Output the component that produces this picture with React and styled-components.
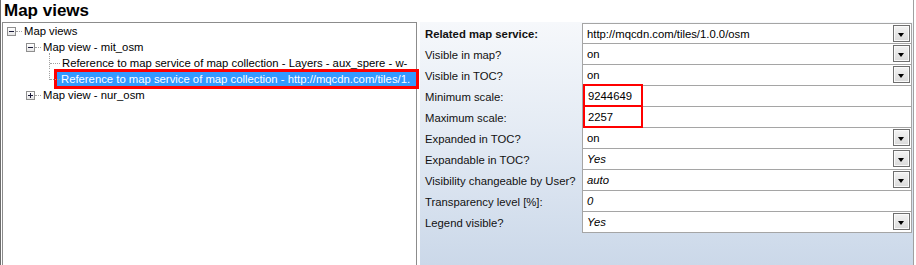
import React from "react";
import styled, { createGlobalStyle, css } from "styled-components";

const GlobalStyle = createGlobalStyle`
	html, body {
		margin: 0;
		padding: 0;
		background: #ffffff;
	}
	body {
		width: 916px;
		height: 265px;
		overflow: hidden;
		font-family: "Liberation Sans", Arial, sans-serif;
		font-size: 11.3px;
		color: #000000;
	}
`;

const Frame = styled.div`
	box-sizing: border-box;
	width: 914px;
	height: 265px;
	border-left: 1px solid #6d6d6d;
	border-right: 1px solid #a0a0a0;
	display: flex;
	flex-direction: column;
	background: #ffffff;
`;

const TitleBar = styled.div`
	height: 22px;
	line-height: 22px;
	padding-left: 3px;
	font-size: 17px;
	font-weight: bold;
	color: #000000;
`;

const Body = styled.div`
	flex: 1;
	display: flex;
	gap: 3px;
	min-height: 0;
`;

const TreePanel = styled.div`
	box-sizing: border-box;
	width: 415px;
	margin-left: 1px;
	border: 1px solid #8c8c8c;
	border-bottom: none;
	background: #ffffff;
`;

const TreeRow = styled.div`
	height: 16px;
	display: flex;
	align-items: center;
	padding-left: ${(p) => p.$level * 19}px;
	white-space: nowrap;
`;

const Connector = styled.div`
	position: relative;
	width: 19px;
	height: 16px;
	flex: none;
`;

const HLine = styled.div`
	position: absolute;
	top: 8px;
	left: ${(p) => p.$from}px;
	right: 0;
	border-top: 1px dotted #a0a0a0;
`;

const VLine = styled.div`
	position: absolute;
	left: 8px;
	top: ${(p) => (p.$first ? -2 : 0)}px;
	height: ${(p) => (p.$last ? 9 : 16)}px;
	border-left: 1px dotted #a0a0a0;
`;

const ExpandBox = styled.div`
	position: absolute;
	left: 4px;
	top: 4px;
	box-sizing: border-box;
	width: 9px;
	height: 9px;
	border: 1px solid #8f8f8f;
	background: linear-gradient(#ffffff, #e6e6e6);

	&::before {
		content: "";
		position: absolute;
		left: 1px;
		top: 3px;
		width: 5px;
		height: 1px;
		background: #1b1b3a;
	}

	${(p) =>
		p.$closed &&
		css`
			&::after {
				content: "";
				position: absolute;
				left: 3px;
				top: 1px;
				width: 1px;
				height: 5px;
				background: #1b1b3a;
			}
		`}
`;

const NodeLabel = styled.span`
	padding: 0 2px;
	line-height: 14px;
	${(p) =>
		p.$selected &&
		css`
			flex: 1;
			min-width: 0;
			overflow: hidden;
			margin-left: -3px;
			padding-left: 4px;
			background: #3399ff;
			color: #ffffff;
			outline: 3px solid #ff0000;
		`}
`;

const PropPanel = styled.div`
	flex: 1;
	padding: 0 1px 0 5px;
	background: linear-gradient(#f6f8fb 0%, #e4ebf4 45%, #cbd8e9 100%);
`;

const PropGrid = styled.div`
	display: grid;
	grid-template-columns: 157px 330px;
	grid-auto-rows: 21px;
	margin-top: 1px;
`;

const PropLabel = styled.div`
	display: flex;
	align-items: center;
	font-weight: ${(p) => (p.$bold ? "bold" : "normal")};
	white-space: nowrap;
	color: #111111;
`;

const ValueCell = styled.div`
	position: relative;
	box-sizing: border-box;
	display: flex;
	align-items: center;
	background: #ffffff;
	border: 1px solid #a5a5a5;
	border-top: ${(p) => (p.$first ? "1px solid #a5a5a5" : "none")};
	padding-left: 4px;
	font-style: ${(p) => (p.$italic ? "italic" : "normal")};
`;

const Marked = styled.span`
	position: absolute;
	left: 0;
	top: -2px;
	bottom: -1px;
	width: 60px;
	border: 2px solid #ff0000;
	box-sizing: border-box;
	padding-left: 3px;
	display: flex;
	align-items: center;
`;

const DropButton = styled.div`
	position: absolute;
	right: 1px;
	top: 1px;
	box-sizing: border-box;
	width: 17px;
	height: 17px;
	border: 1px solid #6f6f6f;
	box-shadow: inset 0 0 0 1px #fafafa;
	background: linear-gradient(#f3f3f3, #dadada);

	&::after {
		content: "";
		position: absolute;
		left: 4px;
		top: 7px;
		border-left: 3.5px solid transparent;
		border-right: 3.5px solid transparent;
		border-top: 4px solid #000000;
	}
`;

const treeNodes = [
	{ level: 0, text: "Map views", box: "open" },
	{ level: 1, text: "Map view - mit_osm", box: "open" },
	{ level: 2, text: "Reference to map service of map collection - Layers - aux_spere - w-", line: "first" },
	{ level: 2, text: "Reference to map service of map collection - http://mqcdn.com/tiles/1.", line: "last", selected: true },
	{ level: 1, text: "Map view - nur_osm", box: "closed" },
];

const properties = [
	{ label: "Related map service:", value: "http://mqcdn.com/tiles/1.0.0/osm", bold: true, drop: true },
	{ label: "Visible in map?", value: "on", drop: true },
	{ label: "Visible in TOC?", value: "on", drop: true },
	{ label: "Minimum scale:", value: "9244649", marked: true },
	{ label: "Maximum scale:", value: "2257", marked: true },
	{ label: "Expanded in TOC?", value: "on", drop: true },
	{ label: "Expandable in TOC?", value: "Yes", italic: true, drop: true },
	{ label: "Visibility changeable by User?", value: "auto", italic: true, drop: true },
	{ label: "Transparency level [%]:", value: "0", italic: true },
	{ label: "Legend visible?", value: "Yes", italic: true, drop: true },
];

const App = () => {
	return (
		<>
			<GlobalStyle />
			<Frame>
				<TitleBar>Map views</TitleBar>
				<Body>
					<TreePanel>
						{treeNodes.map((node, i) => (
							<TreeRow key={i} $level={node.level}>
								<Connector>
									{node.box ? (
										<>
											<ExpandBox $closed={node.box === "closed"} />
											<HLine $from={13} />
										</>
									) : (
										<>
											<VLine $first={node.line === "first"} $last={node.line === "last"} />
											<HLine $from={9} />
										</>
									)}
								</Connector>
								<NodeLabel $selected={node.selected}>{node.text}</NodeLabel>
							</TreeRow>
						))}
					</TreePanel>
					<PropPanel>
						<PropGrid>
							{properties.map((prop, i) => (
								<React.Fragment key={i}>
									<PropLabel $bold={prop.bold}>{prop.label}</PropLabel>
									<ValueCell $first={i === 0} $italic={prop.italic}>
										{prop.marked ? <Marked>{prop.value}</Marked> : prop.value}
										{prop.drop && <DropButton />}
									</ValueCell>
								</React.Fragment>
							))}
						</PropGrid>
					</PropPanel>
				</Body>
			</Frame>
		</>
	);
};

export default App;
